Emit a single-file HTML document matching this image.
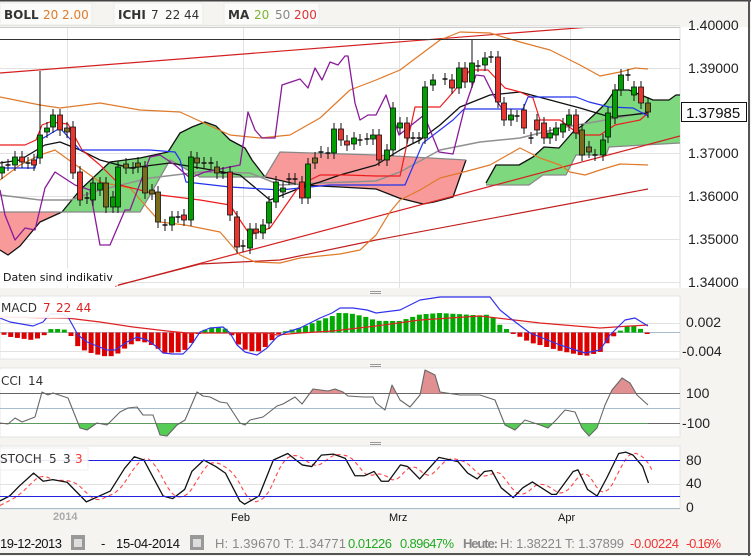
<!DOCTYPE html>
<html><head><meta charset="utf-8"><style>
html,body{margin:0;padding:0;background:#f5f4f1;}
svg{display:block;font-family:"Liberation Sans",sans-serif;}
</style></head><body>
<svg id="s" width="751" height="556" viewBox="0 0 751 556" xmlns="http://www.w3.org/2000/svg">
<defs>
<clipPath id="cm"><rect x="0" y="28" width="680" height="260"/></clipPath>
<clipPath id="cup"><rect x="0" y="368" width="680" height="25.5"/></clipPath>
<clipPath id="cdn"><rect x="0" y="423" width="680" height="14"/></clipPath>
</defs>
<rect x="0" y="0" width="751" height="556" fill="#f5f4f1"/>
<rect x="0" y="0" width="751" height="1.5" fill="#444"/>
<rect x="748" y="0" width="2" height="556" fill="#555"/>
<rect x="0" y="553" width="751" height="2" fill="#555"/>
<g font-family="'DejaVu Sans',sans-serif" font-size="12">
<rect x="0" y="3" width="92" height="22" fill="#fbfbfa" stroke="#ebebea"/>
<text x="4" y="19" fill="#333" font-weight="bold">BOLL</text><text x="43" y="19" fill="#e07a2a">20</text><text x="62" y="19" fill="#e07a2a">2.00</text>
<rect x="114" y="3" width="89" height="22" fill="#fbfbfa" stroke="#ebebea"/>
<text x="118" y="19" fill="#333" font-weight="bold">ICHI</text><text x="151" y="19" fill="#333">7</text><text x="165" y="19" fill="#333">22</text><text x="184" y="19" fill="#333">44</text>
<rect x="224" y="3" width="95" height="22" fill="#fbfbfa" stroke="#ebebea"/>
<text x="228" y="19" fill="#333" font-weight="bold">MA</text><text x="254" y="19" fill="#7cb52e">20</text><text x="275" y="19" fill="#888">50</text><text x="294" y="19" fill="#d33">200</text>
</g>
<rect x="0" y="27" width="680" height="261" fill="#fff"/>
<rect x="680" y="27" width="68" height="261" fill="#fff"/>
<line x1="680" y1="27" x2="680" y2="288" stroke="#ddd"/>
<g stroke="#e2e2e2" stroke-width="1">
<line x1="0" y1="25.5" x2="680" y2="25.5"/><line x1="0" y1="68.5" x2="680" y2="68.5"/><line x1="0" y1="111.5" x2="680" y2="111.5"/><line x1="0" y1="153.5" x2="680" y2="153.5"/><line x1="0" y1="196.5" x2="680" y2="196.5"/><line x1="0" y1="239.5" x2="680" y2="239.5"/><line x1="0" y1="282.5" x2="680" y2="282.5"/>
</g>
<g id="vg" stroke="#e2e2e2"></g>
<line x1="0" y1="27.5" x2="680" y2="27.5" stroke="#ccc"/>
<g id="main" clip-path="url(#cm)"></g>
<line x1="0" y1="39.5" x2="680" y2="39.5" stroke="#333"/>
<g font-size="14" fill="#222">
<text x="688" y="30">1.40000</text><text x="688" y="73">1.39000</text><text x="688" y="158">1.37000</text><text x="688" y="201">1.36000</text><text x="688" y="244">1.35000</text><text x="688" y="287">1.34000</text>
</g>
<rect x="681.5" y="102.5" width="65" height="19" fill="#fff" stroke="#111"/>
<text x="686" y="118" font-size="15" fill="#111">1.37985</text>
<rect x="0" y="268" width="118" height="18" fill="#fff" opacity="0.8"/>
<text x="3" y="281" font-size="11" font-family="'DejaVu Sans',sans-serif" fill="#111">Daten sind indikativ</text>
<g fill="#999"><rect x="370" y="291" width="11" height="1"/><rect x="370" y="293" width="11" height="1"/><rect x="370" y="364" width="11" height="1"/><rect x="370" y="366" width="11" height="1"/><rect x="370" y="442" width="11" height="1"/><rect x="370" y="444" width="11" height="1"/></g>
<rect x="0" y="296" width="680" height="63" fill="#fff" stroke="#e4e4e4"/>
<rect x="0" y="368" width="680" height="69" fill="#fff" stroke="#e4e4e4"/>
<rect x="0" y="446" width="680" height="63" fill="#fff" stroke="#e4e4e4"/>
<g stroke="#e2e2e2"><line x1="0" y1="323.5" x2="680" y2="323.5"/><line x1="0" y1="351.5" x2="680" y2="351.5"/><line x1="0" y1="484.5" x2="680" y2="484.5"/></g>
<line x1="0" y1="332.5" x2="680" y2="332.5" stroke="#a9bccc"/>
<line x1="0" y1="393.5" x2="680" y2="393.5" stroke="#666"/>
<line x1="0" y1="408.5" x2="680" y2="408.5" stroke="#a9bccc"/>
<line x1="0" y1="423.5" x2="680" y2="423.5" stroke="#666"/>
<g id="sub"></g>
<rect x="0" y="510" width="748" height="43" fill="#f5f4f1"/>
<line x1="0" y1="508.5" x2="680" y2="508.5" stroke="#a9bccc"/>
<line x1="0" y1="460.5" x2="680" y2="460.5" stroke="#2222dd"/>
<line x1="0" y1="496.5" x2="680" y2="496.5" stroke="#2222dd"/>
<g font-size="14" fill="#222">
<text x="686" y="327">0.002</text><text x="682" y="356">-0.004</text>
<text x="686" y="398">100</text><text x="682" y="428">-100</text>
<text x="686" y="465">80</text><text x="686" y="488">40</text><text x="686" y="512">0</text>
</g>
<g font-family="'DejaVu Sans',sans-serif" font-size="12">
<rect x="0" y="298" width="93" height="20" fill="#fff" opacity=".9"/>
<text x="1" y="312" fill="#333">MACD</text><text x="43" y="312" fill="#d22">7</text><text x="56" y="312" fill="#d22">22</text><text x="76" y="312" fill="#d22">44</text>
<rect x="0" y="370" width="45" height="20" fill="#fff" opacity=".9"/>
<text x="1" y="385" fill="#333">CCI</text><text x="28" y="385" fill="#333">14</text>
<rect x="0" y="448" width="88" height="22" fill="#fff" opacity=".9" stroke="#eee"/>
<text x="0" y="463" fill="#333">STOCH</text><text x="49" y="463" fill="#333">5</text><text x="63" y="463" fill="#333">3</text><text x="75" y="463" fill="#e33">3</text>
</g>
<g font-size="11"><text x="53" y="520" fill="#aaa" font-weight="bold">2014</text><text x="231" y="521" fill="#111">Feb</text><text x="389" y="521" fill="#111">Mrz</text><text x="558" y="521" fill="#111">Apr</text></g>
<g font-size="13">
<text x="0" y="548" fill="#111" textLength="62">19-12-2013</text>
<rect x="71" y="535" width="14" height="15" fill="#999"/><rect x="74" y="539" width="8" height="8" fill="#ddd"/>
<text x="101" y="548" fill="#111">-</text>
<text x="116" y="548" fill="#111" textLength="64">15-04-2014</text>
<rect x="190" y="535" width="14" height="15" fill="#999"/><rect x="193" y="539" width="8" height="8" fill="#ddd"/>
<text x="215" y="548" fill="#888" textLength="131">H: 1.39670  T: 1.34771</text>
<text x="348" y="548" fill="#2a2" textLength="44">0.01226</text>
<text x="400" y="548" fill="#2a2" textLength="54">0.89647%</text>
<text x="463" y="548" fill="#888" font-weight="bold" textLength="35">Heute:</text>
<text x="500" y="548" fill="#888" textLength="124">H: 1.38221  T: 1.37899</text>
<text x="630" y="548" fill="#e33" textLength="49">-0.00224</text>
<text x="686" y="548" fill="#e33" textLength="35">-0.16%</text>
</g>
</svg>
<script>
const NS="http://www.w3.org/2000/svg";
function el(p,t,a){const e=document.createElementNS(NS,t);for(const k in a)e.setAttribute(k,a[k]);p.appendChild(e);return e;}
const M=document.getElementById('main'),S=document.getElementById('sub'),VG=document.getElementById('vg');
[67,243,399,570].forEach(x=>{el(VG,'line',{x1:x+.5,y1:27,x2:x+.5,y2:288});[[296,359],[368,437],[446,509]].forEach(r=>el(VG,'line',{x1:x+.5,y1:r[0],x2:x+.5,y2:r[1]}));});
function pts(a){return a.map(p=>p.join(',')).join(' ');}
function pl(g,a,c,w,extra){const o={points:pts(a),fill:'none',stroke:c,'stroke-width':w||1,'stroke-linejoin':'round'};Object.assign(o,extra||{});return el(g,'polyline',o);}
function pg(g,a,f,o){return el(g,'polygon',{points:pts(a),fill:f,opacity:o||1});}
const rc1T=[[0,212],[62,212]],rc1B=[[62,212],[40,222],[20,246],[8,255],[0,250]];
pg(M,rc1T.concat(rc1B),'#f89a9a');
const g1T=[[62,212],[80,190],[110,162],[140,158],[168,152],[180,133],[192,127],[205,122],[216,126],[230,140],[245,148],[252,160],[265,177]];
const g1B=[[265,177],[230,177],[200,177],[170,160],[150,195],[140,212],[62,212]];
pg(M,g1T.concat(g1B),'#7ed87e');
const r2T=[[265,177],[280,152],[376,155],[466,160]];
const r2B=[[466,160],[453,197],[434,202],[423,204],[399,198],[376,189],[340,187],[300,185],[265,177]];
pg(M,r2T.concat(r2B),'#f89a9a');
const g2T=[[486,183],[496,165],[519,165],[533,157],[544,147],[559,148],[573,132],[583,125],[596,113],[606,103],[615,90],[629,90],[653,100],[669,100],[676,95],[680,95]];
const g2B=[[680,143],[609,147],[606,155],[576,155],[566,175],[543,175],[529,185],[486,185]];
pg(M,g2T.concat(g2B),'#7ed87e');
pl(M,[[0,250],[8,255],[20,246],[40,222],[62,212]].concat(g1T.slice(1)),'#111',1.3);
pl(M,r2B.slice().reverse(),'#111',1.3);pl(M,g2T,'#111',1.3);
pl(M,[[0,212],[140,212],[150,195],[170,160],[200,177],[265,177],[280,152],[376,155],[466,160]],'#888',1.3);
pl(M,g2B.slice().reverse(),'#888',1.3);
pl(M,[[0,73],[680,20]],'#d42020',1.2);
pl(M,[[115,286],[680,136]],'#d42020',1.2);
pl(M,[[115,286],[200,264],[280,260],[376,240],[648,189]],'#c02020',1.2);
pl(M,[[0,97],[40,105],[60,108],[100,103],[140,110],[180,112],[230,135],[260,138],[290,135],[320,118],[350,90],[376,80],[400,70],[420,55],[440,40],[460,32],[490,33],[520,42],[550,50],[580,65],[600,76],[620,72],[635,68],[648,69]],'#e07a2a',1.2);
pl(M,[[0,180],[20,165],[40,155],[55,150],[80,168],[100,182],[130,188],[160,222],[185,225],[220,232],[240,255],[255,262],[280,263],[300,258],[340,254],[360,250],[376,235],[390,212],[400,200],[420,190],[440,178],[460,173],[490,165],[520,148],[540,158],[560,165],[570,172],[585,175],[600,170],[620,164],[648,165]],'#e07a2a',1.2);
pl(M,[[0,195],[40,200],[70,200],[100,190],[150,178],[200,172],[250,173],[280,185],[320,183],[376,181],[400,172],[440,150],[480,142],[520,138],[560,128],[600,121],[648,112]],'#909090',1.5);
pl(M,[[0,163],[20,160],[45,145],[60,142],[80,150],[100,160],[130,168],[170,163],[200,168],[240,175],[270,200],[300,188],[320,182],[340,175],[376,165],[400,150],[420,140],[440,125],[460,107],[490,95],[520,92],[550,100],[580,108],[610,117],[630,115],[648,113]],'#111',1.3);
pl(M,[[0,145],[25,145],[36,140],[42,125],[50,122],[68,124],[82,150],[100,165],[120,185],[160,195],[200,200],[230,205],[250,235],[270,228],[300,185],[320,175],[345,175],[376,176],[400,176],[415,107],[440,107],[455,90],[470,70],[488,70],[505,88],[520,92],[533,98],[540,120],[560,120],[580,135],[600,135],[615,125],[640,120],[648,113]],'#ee1c1c',1.2);
pl(M,[[0,168],[35,168],[40,140],[60,128],[80,150],[150,150],[175,152],[180,160],[186,182],[230,187],[280,190],[330,185],[376,185],[405,185],[423,143],[453,120],[464,109],[523,109],[528,97],[576,97],[589,102],[609,107],[633,108],[648,116]],'#2233ee',1.2);
pl(M,[[0,190],[5,215],[15,240],[25,228],[35,230],[45,188],[55,172],[75,185],[90,190],[100,245],[110,245],[125,210],[130,210],[150,157],[160,155],[175,165],[190,178],[205,172],[225,168],[240,165],[248,112],[255,130],[262,138],[275,138],[282,85],[300,79],[308,88],[315,68],[322,80],[330,62],[338,65],[345,56],[348,56],[355,103],[360,120],[368,115],[376,115],[386,95],[399,135],[424,115],[439,152],[453,154],[464,110],[476,75],[484,76],[496,100],[503,110]],'#8a1a9a',1.3);
const C=[[2,167,173,'g'],[8,165,165,'d'],[15,157,165,'g'],[22,157,162,'r'],[28,163,163,'d'],[34,160,165,'r'],[40,135,158,'g',71],[47,128,132,'g'],[53,115,127,'g'],[60,115,130,'r'],[67,128,132,'o'],[73,127,173,'r'],[80,172,200,'r'],[87,198,198,'d'],[93,183,200,'g'],[100,183,190,'g'],[106,183,207,'o'],[113,197,207,'g'],[118,167,207,'g'],[126,164,168,'o'],[133,168,168,'d'],[138,163,167,'o'],[145,167,193,'o'],[152,190,194,'o'],[158,192,222,'o'],[165,225,225,'d'],[172,217,225,'g'],[178,217,217,'d'],[184,215,220,'r'],[191,157,220,'g'],[197,158,163,'o'],[204,163,163,'d'],[211,163,163,'d'],[217,167,173,'o'],[223,173,173,'d'],[230,172,215,'r'],[237,217,247,'r'],[243,246,246,'d'],[250,229,248,'g'],[256,229,233,'r'],[263,225,233,'g'],[269,202,223,'g'],[276,182,202,'g'],[283,188,192,'g'],[289,179,179,'d'],[295,179,179,'d'],[302,182,198,'r'],[308,164,198,'g'],[315,158,163,'o'],[321,152,152,'d'],[328,153,153,'d'],[334,129,153,'g'],[341,129,140,'r'],[347,141,145,'r'],[354,138,144,'g'],[360,140,140,'d'],[367,139,139,'d'],[373,135,139,'g'],
[379,135,160,'r'],[387,150,160,'g'],[393,108,150,'g'],[400,123,128,'g'],[407,123,138,'r'],[413,138,138,'d'],[419,138,138,'d'],[425,87,138,'g'],[433,80,85,'g'],[445,79,79,'d'],[452,80,88,'r'],[459,68,88,'g'],[465,68,82,'r'],[472,63,82,'g',40],[478,66,66,'d'],[485,58,65,'g'],[491,57,57,'d'],[498,57,102,'r'],[504,103,120,'r'],[511,115,120,'g'],[517,116,116,'d'],[524,110,128,'r'],[531,138,138,'d'],[537,120,130,'r'],[544,123,138,'r'],[550,133,138,'g'],[556,128,135,'g'],[563,124,132,'g'],[569,115,125,'g'],[576,115,133,'r'],[582,130,155,'o'],[589,147,152,'o'],[595,155,155,'d'],[603,140,155,'g'],[608,113,137,'g'],[615,90,118,'g'],[621,75,90,'g'],[628,75,75,'d'],[634,87,95,'g'],[641,87,103,'r'],[648,103,112,'o']];
const col={g:'#00a000',r:'#e8352f',o:'#7a6a1c'};
C.forEach(c=>{const [x,t,b,k,wt,wb]=c;el(M,'line',{x1:x,y1:wt||t-6,x2:x,y2:wb||b+6,stroke:'#111'});
if(k==='d')el(M,'line',{x1:x-2.5,y1:t,x2:x+2.5,y2:t,stroke:'#111','stroke-width':1.5});
else el(M,'rect',{x:x-2.5,y:t,width:5,height:Math.max(b-t,2),fill:col[k],stroke:'#111','stroke-width':.8});});
const mb=[[0,318],[10,322],[33,326],[43,322],[50,314],[63,314],[68,317],[78,335],[87,342],[107,350],[115,350],[127,342],[137,337],[147,340],[157,347],[163,353],[173,354],[183,354],[190,347],[200,332],[210,328],[223,327],[230,333],[237,345],[245,352],[257,355],[267,348],[277,337],[287,332],[300,328],[310,323],[320,318],[332,313],[340,308],[353,308],[367,310],[376,313],[400,310],[420,300],[440,297],[490,297],[500,310],[510,318],[530,333],[560,345],[585,353],[600,350],[610,335],[625,320],[635,318],[648,326]];
const ms=[[0,317],[67,318],[100,322],[133,327],[167,331],[187,333],[233,333],[267,333],[277,335],[300,333],[333,331],[376,326],[420,320],[480,316],[540,323],[600,328],[630,326],[648,325]];
function interp(a,x){for(let i=1;i<a.length;i++)if(x<=a[i][0]){const p=a[i-1],q=a[i];return p[1]+(q[1]-p[1])*(x-p[0])/(q[0]-p[0]||1);}return a[a.length-1][1];}
for(let x=4;x<=648;x+=6.7){const h=(interp(ms,x)-interp(mb,x))*0.9;const y0=332.5;
el(S,'rect',{x:x-2.5,y:h>0?y0-h:y0,width:5,height:Math.max(Math.abs(h),1.5),fill:h>0?'#00aa00':'#dd0000'});}
pl(S,ms,'#dd2222',1.2);pl(S,mb,'#3333ee',1.2);
const cc=[[0,423],[8,424],[15,418],[22,422],[35,417],[42,392],[48,395],[53,393],[68,398],[80,428],[87,430],[97,423],[107,425],[120,412],[128,408],[137,407],[143,415],[153,415],[160,435],[167,436],[177,425],[185,420],[197,392],[203,396],[210,397],[220,402],[227,403],[240,423],[245,425],[250,420],[263,417],[277,406],[283,404],[295,397],[302,404],[313,389],[328,391],[335,389],[343,392],[348,396],[363,397],[373,397],[376,403],[385,410],[392,385],[400,400],[410,407],[420,395],[425,370],[435,375],[440,392],[460,395],[480,395],[495,400],[505,425],[515,430],[525,420],[540,425],[548,428],[556,420],[565,410],[575,412],[582,428],[589,436],[597,428],[605,405],[612,390],[622,378],[630,383],[637,395],[648,405]];
pg(S,cc.concat([[648,393.5],[0,393.5]]),'#e09090',1).setAttribute('clip-path','url(#cup)');
pg(S,cc.concat([[648,423.5],[0,423.5]]),'#55cc55',1).setAttribute('clip-path','url(#cdn)');
pl(S,cc,'#666',1.1);
const k=[[0,185],[20,170],[40,140],[70,100],[90,125],[110,120],[140,128],[180,188],[230,155],[260,85],[280,50],[300,60],[340,170],[360,178],[385,150],[400,95],[425,60],[450,80],[470,100],[500,185],[510,195],[540,170],[570,60],[600,40],[630,75],[650,80],[670,45],[695,42],[720,55],[740,108],[760,108],[780,95],[795,125],[810,125],[835,75],[850,80],[875,118],[915,52],[955,65],[975,100],[995,118],[1010,95],[1025,92],[1045,145],[1070,175],[1090,145],[1110,127],[1150,165],[1160,165],[1195,95],[1205,90],[1225,150],[1245,170],[1265,115],[1290,40],[1305,36],[1320,45],[1340,80],[1352,130]].map(p=>[p[0]/2.085,440.4+p[1]*0.327]);
const d=[];for(let x=0;x<=652;x+=4){const v=(interp(k,x-4)+interp(k,x-9)+interp(k,x-14))/3;d.push([x,v]);}
pl(S,d,'#ff4444',1.1,{'stroke-dasharray':'4,3'});
pl(S,k,'#111',1.3);
</script>
</body></html>
